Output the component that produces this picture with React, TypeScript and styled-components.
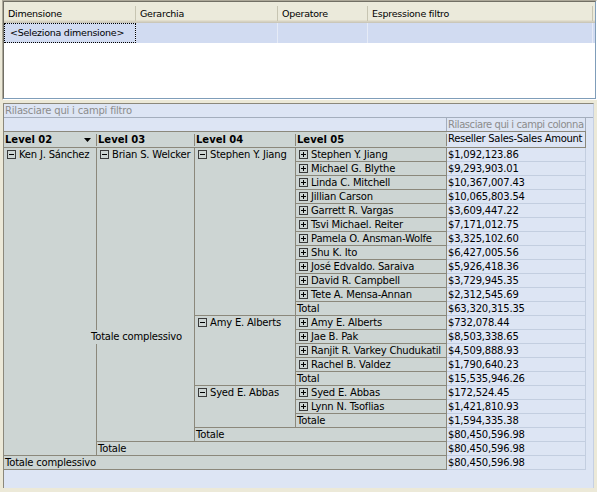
import React from "react";
import styled, { createGlobalStyle, css } from "styled-components";

const GlobalStyle = createGlobalStyle`
  html, body {
    margin: 0;
    padding: 0;
    background: #ece9d8;
  }
  body {
    font-family: "DejaVu Sans", Verdana, sans-serif;
    color: #000;
  }
`;

const line = "#8b887b";
const cellGrey = "#cdd5d3";
const paleBlue = "#dde5f4";
const valueLine = "#c3cee0";
const dropText = "#8c8c8c";

const listColumns = "132px 142px 90px 225px 1fr";
const pivotColumns = "93px 98px 101px 151px 139px";

const Window = styled.div`
  width: 597px;
  height: 492px;
  display: flex;
  flex-direction: column;
  background: #ece9d8;
  overflow: hidden;
`;

/* ---------- filter list ---------- */

const FilterList = styled.div`
  flex: none;
  width: 595px;
  height: 100px;
  margin-left: 2px;
  box-sizing: border-box;
  border: 1px solid;
  border-color: #aca899 #ffffff #ffffff #aca899;
`;

const ListBody = styled.div`
  height: 100%;
  box-sizing: border-box;
  border: 1px solid;
  border-color: #716f64 #7f9db9 #7f9db9 #716f64;
  background: #fff;
  font-size: 9.5px;
  letter-spacing: -0.25px;
`;

const ListHeader = styled.div`
  display: grid;
  grid-template-columns: ${listColumns};
  height: 21px;
  box-sizing: border-box;
  background: #ebeadb;
  border-bottom: 1px solid #cbc7b8;
  box-shadow: inset 0 -1px #d6d2c2, inset 0 -2px #e2decd;
`;

const ListHeaderCell = styled.div`
  position: relative;
  padding: 5px 0 0 4px;
  line-height: 14px;
  white-space: nowrap;
  overflow: hidden;

  &::after {
    content: "";
    position: absolute;
    right: 0;
    top: 4px;
    bottom: 1px;
    width: 1px;
    background: #c7c5b2;
  }
`;

const ListRow = styled.div<{ $selected?: boolean }>`
  display: grid;
  grid-template-columns: ${listColumns};
  height: 20px;
  background: ${(p) => (p.$selected ? "#d1dbf1" : "transparent")};
`;

const ListCell = styled.div<{ $focused?: boolean }>`
  padding-left: 6px;
  line-height: 20px;
  white-space: nowrap;
  border-right: 1px solid #e6ebf6;

  ${(p) =>
    p.$focused &&
    css`
      outline: 1px dotted #000;
      outline-offset: -1px;
    `}
`;

/* ---------- pivot ---------- */

const Pivot = styled.div`
  flex: 1;
  width: 591px;
  margin: 3px 0 4px 3px;
  box-sizing: border-box;
  border-top: 1px solid ${line};
  border-left: 1px solid ${line};
  border-right: 1px solid #c6d0e2;
  background: ${paleBlue};
  font-size: 10px;
  letter-spacing: -0.2px;
`;

const FilterDrop = styled.div`
  height: 14px;
  box-sizing: border-box;
  padding-left: 1px;
  border-bottom: 1px solid #a4aebd;
  line-height: 13px;
  color: ${dropText};
`;

const ColumnDropRow = styled.div`
  display: grid;
  grid-template-columns: ${pivotColumns};
  height: 13px;
`;

const ColumnDrop = styled.div`
  grid-column: 5;
  margin-left: -1px;
  padding-left: 1px;
  border-left: 1px solid #a4aebd;
  border-right: 1px solid #a4aebd;
  line-height: 13px;
  letter-spacing: -0.45px;
  color: ${dropText};
  white-space: nowrap;
  overflow: hidden;
`;

const PivotGrid = styled.div`
  position: relative;
  display: grid;
  grid-template-columns: ${pivotColumns};
  grid-template-rows: 17px;
  grid-auto-rows: 14px;
`;

const LevelHead = styled.div`
  grid-row: 1;
  position: relative;
  display: flex;
  align-items: flex-start;
  justify-content: space-between;
  padding: 0 6px 0 1px;
  border-top: 1px solid ${line};
  border-bottom: 1px solid ${line};
  background: ${cellGrey};
  font-size: 10px;
  font-weight: bold;
  letter-spacing: 0;
  line-height: 15px;

  &::after {
    content: "";
    position: absolute;
    right: 0;
    top: 2px;
    bottom: 1px;
    width: 1px;
    background: ${line};
  }
`;

const SortArrow = styled.svg`
  flex: none;
  margin-top: 6px;
`;

const MeasureHead = styled.div`
  grid-row: 1;
  grid-column: 5;
  margin-left: -1px;
  padding-left: 1px;
  border: 1px solid ${line};
  background: ${paleBlue};
  line-height: 13px;
  letter-spacing: -0.3px;
  white-space: nowrap;
  overflow: hidden;
`;

const MemberCell = styled.div<{
  $row: number;
  $col: number;
  $rows: number;
  $cols: number;
  $total: boolean;
}>`
  grid-row: ${(p) => p.$row} / span ${(p) => p.$rows};
  grid-column: ${(p) => p.$col} / span ${(p) => p.$cols};
  display: flex;
  align-items: flex-start;
  gap: 3px;
  padding-left: ${(p) => (p.$total ? 1 : 3)}px;
  border-right: 1px solid ${line};
  border-bottom: 1px solid ${line};
  background: ${cellGrey};
  line-height: 13px;
  white-space: nowrap;
  overflow: hidden;
`;

const ValueCell = styled.div<{ $row: number }>`
  grid-row: ${(p) => p.$row};
  grid-column: 5;
  padding-left: 1px;
  border-right: 1px solid ${valueLine};
  border-bottom: 1px solid ${valueLine};
  line-height: 13px;
  white-space: nowrap;
`;

const FloatingTotal = styled.div`
  position: absolute;
  left: 87px;
  top: 199px;
  line-height: 14px;
  background: ${cellGrey};
  white-space: nowrap;
`;

const ToggleIcon = styled.svg`
  flex: none;
  margin-top: 2px;
`;

function Toggle({ open }: { open: boolean }) {
  return (
    <ToggleIcon width="9" height="9" viewBox="0 0 9 9">
      <rect x="0.5" y="0.5" width="8" height="8" fill="none" stroke="#3a3a3a" />
      <path d="M2 4.5h5" stroke="#000" />
      {!open && <path d="M4.5 2v5" stroke="#000" />}
    </ToggleIcon>
  );
}

type Member = {
  text: string;
  row: number;
  col: number;
  rows?: number;
  cols?: number;
  toggle?: "open" | "closed";
};

const level05 = [
  "Stephen Y. Jiang",
  "Michael G. Blythe",
  "Linda C. Mitchell",
  "Jillian Carson",
  "Garrett R. Vargas",
  "Tsvi Michael. Reiter",
  "Pamela O. Ansman-Wolfe",
  "Shu K. Ito",
  "José Edvaldo. Saraiva",
  "David R. Campbell",
  "Tete A. Mensa-Annan",
  "",
  "Amy E. Alberts",
  "Jae B. Pak",
  "Ranjit R. Varkey Chudukatil",
  "Rachel B. Valdez",
  "",
  "Syed E. Abbas",
  "Lynn N. Tsoflias",
  "",
];

const totalsAt: Record<number, string> = { 13: "Total", 18: "Total", 21: "Totale" };

const members: Member[] = [
  { text: "Ken J. Sánchez", row: 2, col: 1, rows: 22, toggle: "open" },
  { text: "Totale complessivo", row: 24, col: 1, cols: 4 },
  { text: "Brian S. Welcker", row: 2, col: 2, rows: 21, toggle: "open" },
  { text: "Totale", row: 23, col: 2, cols: 3 },
  { text: "Stephen Y. Jiang", row: 2, col: 3, rows: 12, toggle: "open" },
  { text: "Amy E. Alberts", row: 14, col: 3, rows: 5, toggle: "open" },
  { text: "Syed E. Abbas", row: 19, col: 3, rows: 3, toggle: "open" },
  { text: "Totale", row: 22, col: 3, cols: 2 },
  ...level05.map((name, i) => {
    const row = i + 2;
    return name
      ? { text: name, row, col: 4, toggle: "closed" as const }
      : { text: totalsAt[row], row, col: 4 };
  }),
];

const values = [
  "$1,092,123.86",
  "$9,293,903.01",
  "$10,367,007.43",
  "$10,065,803.54",
  "$3,609,447.22",
  "$7,171,012.75",
  "$3,325,102.60",
  "$6,427,005.56",
  "$5,926,418.36",
  "$3,729,945.35",
  "$2,312,545.69",
  "$63,320,315.35",
  "$732,078.44",
  "$8,503,338.65",
  "$4,509,888.93",
  "$1,790,640.23",
  "$15,535,946.26",
  "$172,524.45",
  "$1,421,810.93",
  "$1,594,335.38",
  "$80,450,596.98",
  "$80,450,596.98",
  "$80,450,596.98",
];

const listColumnsTitles = ["Dimensione", "Gerarchia", "Operatore", "Espressione filtro"];

export default function App() {
  return (
    <>
      <GlobalStyle />
      <Window>
        <FilterList>
          <ListBody>
            <ListHeader>
              {listColumnsTitles.map((t) => (
                <ListHeaderCell key={t}>{t}</ListHeaderCell>
              ))}
            </ListHeader>
            <ListRow $selected>
              <ListCell $focused>&lt;Seleziona dimensione&gt;</ListCell>
              <ListCell />
              <ListCell />
              <ListCell />
            </ListRow>
          </ListBody>
        </FilterList>

        <Pivot>
          <FilterDrop>Rilasciare qui i campi filtro</FilterDrop>
          <ColumnDropRow>
            <ColumnDrop>Rilasciare qui i campi colonna</ColumnDrop>
          </ColumnDropRow>
          <PivotGrid>
            <LevelHead>
              <span>Level 02</span>
              <SortArrow width="7" height="4" viewBox="0 0 7 4">
                <path d="M0 0h7L3.5 4z" fill="#000" />
              </SortArrow>
            </LevelHead>
            <LevelHead>Level 03</LevelHead>
            <LevelHead>Level 04</LevelHead>
            <LevelHead>Level 05</LevelHead>
            <MeasureHead>Reseller Sales-Sales Amount</MeasureHead>

            {members.map((m) => (
              <MemberCell
                key={`${m.row}-${m.col}`}
                $row={m.row}
                $col={m.col}
                $rows={m.rows ?? 1}
                $cols={m.cols ?? 1}
                $total={!m.toggle}
              >
                {m.toggle && <Toggle open={m.toggle === "open"} />}
                <span>{m.text}</span>
              </MemberCell>
            ))}

            {values.map((v, i) => (
              <ValueCell key={i} $row={i + 2}>
                {v}
              </ValueCell>
            ))}

            <FloatingTotal>Totale complessivo</FloatingTotal>
          </PivotGrid>
        </Pivot>
      </Window>
    </>
  );
}
